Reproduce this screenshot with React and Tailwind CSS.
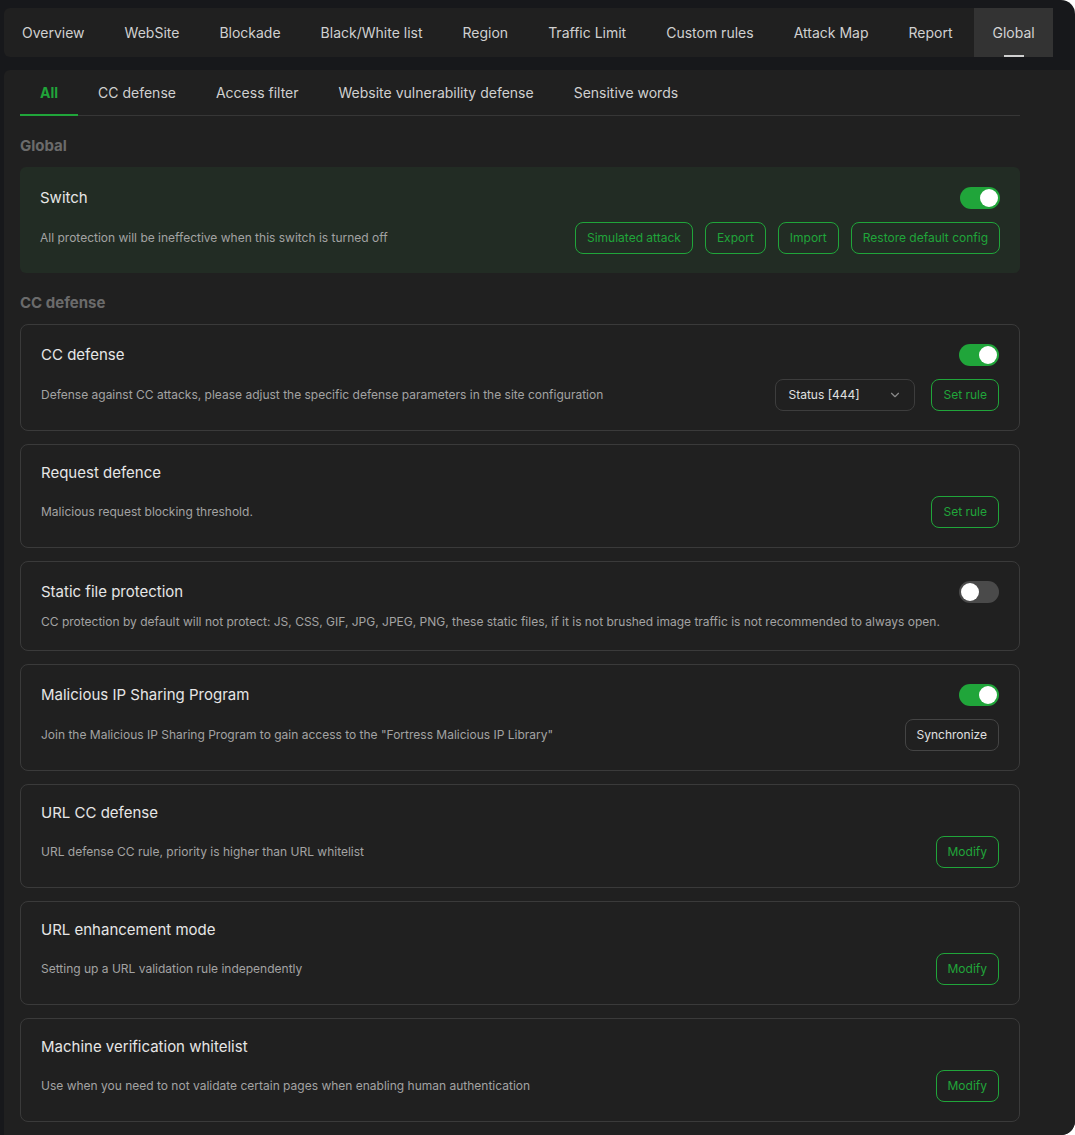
import { ChevronDown } from "lucide-react";

const navItems = ["Overview", "WebSite", "Blockade", "Black/White list", "Region", "Traffic Limit", "Custom rules", "Attack Map", "Report", "Global"];
const subTabs = ["All", "CC defense", "Access filter", "Website vulnerability defense", "Sensitive words"];

function Toggle({ on }) {
    return (
        <div className={on ? "flex items-center justify-end w-10 h-[22px] rounded-full bg-[#20a53a] pr-[2px]" : "flex items-center justify-start w-10 h-[22px] rounded-full bg-[#4a4a4a] pl-[2px]"}>
            <div className="w-[18px] h-[18px] rounded-full bg-white"></div>
        </div>
    );
}

function GreenButton({ children }) {
    return (
        <button className="h-8 px-[11px] rounded-lg border border-[#20a53a] text-[#20a53a] text-[12px] leading-none whitespace-nowrap">
            {children}
        </button>
    );
}

function Card({ title, desc, toggle, children }) {
    const hasActions = !!children;
    return (
        <div className="border border-[#3a3a3a] rounded-lg px-5 pt-[19px] pb-[19px]">
            <div className={toggle === undefined ? "flex items-center justify-between h-[19px]" : "flex items-center justify-between h-[22px]"}>
                <span className="text-[15px] text-[#e6e6e6]">{title}</span>
                {toggle !== undefined && <Toggle on={toggle} />}
            </div>
            <div className={hasActions ? "flex items-center justify-between mt-[13px] h-8" : "flex items-center mt-[10px] h-[18px]"}>
                <span className="text-[12px] text-[#a3a3a3]">{desc}</span>
                {hasActions && <div className="flex items-center gap-4">{children}</div>}
            </div>
        </div>
    );
}

function SectionTitle({ children }) {
    return <div className="mt-5 mb-[11px] h-5 flex items-center text-[15px] font-bold text-[#6b6b6b]">{children}</div>;
}

export default function App() {
    return (
        <div className="w-[1075px] min-h-[1135px] bg-white" style={{ fontFamily: "Inter, 'Noto Sans', sans-serif" }}>
            <div className="min-h-[1135px] bg-[#17181b] rounded-r-[14px] overflow-hidden pt-2 pl-1 flex flex-col">
                {/* top navigation */}
                <div className="mr-[22px] h-[49px] bg-[#202020] rounded-md flex gap-1">
                    {navItems.map((item) => (
                        <div
                            key={item}
                            className={item === "Global" ? "flex flex-col items-center justify-between px-[18px] bg-[#333333] text-[#d4d4d4] text-[14px]" : "flex flex-col items-center justify-between px-[18px] text-[#d0d0d0] text-[14px]"}
                        >
                            <div className="h-[2px]"></div>
                            <span>{item}</span>
                            <div className={item === "Global" ? "w-5 h-[2px] bg-[#d0d0d0]" : "w-5 h-[2px]"}></div>
                        </div>
                    ))}
                </div>

                {/* content panel */}
                <div className="flex-1 mt-[13px] bg-[#202020] rounded-tl-md pl-4 pb-[13px]">
                    <div className="w-[1000px]">
                        <div className="flex h-[46px] border-b border-[#363636]">
                            {subTabs.map((tab) => (
                                <div
                                    key={tab}
                                    className={tab === "All" ? "flex items-center px-5 -mb-px border-b-2 border-[#20a53a] text-[14px] font-bold text-[#20a53a]" : "flex items-center px-5 -mb-px border-b-2 border-transparent text-[14px] text-[#d0d0d0]"}
                                >
                                    {tab}
                                </div>
                            ))}
                        </div>

                        <SectionTitle>Global</SectionTitle>
                        <div className="bg-[#222c24] rounded-md px-5 pt-5 pb-[19px]">
                            <div className="flex items-center justify-between h-[22px]">
                                <span className="text-[15px] text-[#e6e6e6]">Switch</span>
                                <Toggle on={true} />
                            </div>
                            <div className="flex items-center justify-between mt-[13px] h-8">
                                <span className="text-[12px] text-[#a3a3a3]">All protection will be ineffective when this switch is turned off</span>
                                <div className="flex items-center gap-3">
                                    <GreenButton>Simulated attack</GreenButton>
                                    <GreenButton>Export</GreenButton>
                                    <GreenButton>Import</GreenButton>
                                    <GreenButton>Restore default config</GreenButton>
                                </div>
                            </div>
                        </div>

                        <SectionTitle>CC defense</SectionTitle>
                        <div className="flex flex-col gap-[13px]">
                            <Card title="CC defense" desc="Defense against CC attacks, please adjust the specific defense parameters in the site configuration" toggle={true}>
                                <div className="w-[140px] h-8 rounded-lg border border-[#3d3d3d] px-3 flex items-center justify-between text-[12px] text-[#e0e0e0]">
                                    <span>Status [444]</span>
                                    <ChevronDown size={14} className="text-[#8a8a8a]" />
                                </div>
                                <GreenButton>Set rule</GreenButton>
                            </Card>
                            <Card title="Request defence" desc="Malicious request blocking threshold.">
                                <GreenButton>Set rule</GreenButton>
                            </Card>
                            <Card title="Static file protection" desc="CC protection by default will not protect: JS, CSS, GIF, JPG, JPEG, PNG, these static files, if it is not brushed image traffic is not recommended to always open." toggle={false} />
                            <Card title="Malicious IP Sharing Program" desc='Join the Malicious IP Sharing Program to gain access to the "Fortress Malicious IP Library"' toggle={true}>
                                <button className="h-8 px-[11px] rounded-lg border border-[#444444] text-[#e0e0e0] text-[12px] leading-none">Synchronize</button>
                            </Card>
                            <Card title="URL CC defense" desc="URL defense CC rule, priority is higher than URL whitelist">
                                <GreenButton>Modify</GreenButton>
                            </Card>
                            <Card title="URL enhancement mode" desc="Setting up a URL validation rule independently">
                                <GreenButton>Modify</GreenButton>
                            </Card>
                            <Card title="Machine verification whitelist" desc="Use when you need to not validate certain pages when enabling human authentication">
                                <GreenButton>Modify</GreenButton>
                            </Card>
                        </div>
                    </div>
                </div>
            </div>
        </div>
    );
}
